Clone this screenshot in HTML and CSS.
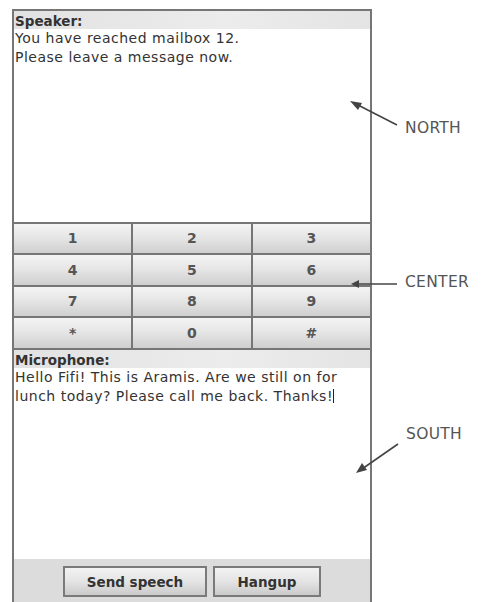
FILE: index.html
```html
<!DOCTYPE html>
<html lang="en">
<head>
    <meta charset="UTF-8">
    <title>BorderLayout phone</title>
    <link rel="stylesheet" href="styles.css">
</head>
<body>
    <div class="figure">
        <div class="phone">
            <!-- NORTH -->
            <div class="area north">
                <div class="area-title">Speaker:</div>
                <div class="area-text">You have reached mailbox 12.<br>Please leave a message now.</div>
            </div>
            <!-- CENTER -->
            <div class="keypad">
                <button class="key">1</button>
                <button class="key">2</button>
                <button class="key">3</button>
                <button class="key">4</button>
                <button class="key">5</button>
                <button class="key">6</button>
                <button class="key">7</button>
                <button class="key">8</button>
                <button class="key">9</button>
                <button class="key">*</button>
                <button class="key">0</button>
                <button class="key">#</button>
            </div>
            <!-- SOUTH -->
            <div class="area south">
                <div class="area-title">Microphone:</div>
                <div class="area-text">Hello Fifi! This is Aramis. Are we still on for lunch today? Please call me back. Thanks!<span class="caret"></span></div>
            </div>
            <div class="actions">
                <button class="action">Send speech</button>
                <button class="action">Hangup</button>
            </div>
        </div>

        <svg class="arrows" width="484" height="602" viewBox="0 0 484 602">
            <line x1="397" y1="125" x2="356" y2="104" />
            <polygon points="350,101 362,103 358,110" />
            <line x1="397" y1="284" x2="358" y2="284" />
            <polygon points="351,284 359,280 359,288" />
            <line x1="398" y1="444" x2="362" y2="469" />
            <polygon points="356,473 362,463 367,470" />
        </svg>
        <span class="label label-north">NORTH</span>
        <span class="label label-center">CENTER</span>
        <span class="label label-south">SOUTH</span>
    </div>
</body>
</html>
```

FILE: styles.css
```css
body {
    margin: 0;
    background-color: #ffffff;
    font-family: "DejaVu Sans", Verdana, sans-serif;
    color: #333;
}
.figure {
    position: relative;
    width: 484px;
    height: 602px;
    overflow: hidden;
    padding: 9px 0 0 12px;
    box-sizing: border-box;
}
.phone {
    width: 360px;
    height: 610px;
    border: 2px solid #767676;
    border-bottom: none;
    box-sizing: border-box;
    display: flex;
    flex-direction: column;
    background-color: #fff;
}
.area {
    display: flex;
    flex-direction: column;
}
.north {
    height: 211px;
}
.south {
    height: 210px;
}
.area-title {
    height: 18px;
    line-height: 20px;
    padding-left: 1px;
    font-size: 13.5px;
    font-weight: bold;
    background: linear-gradient(to right, #e2e2e2, #ececec 60%, #e4e4e4);
}
.area-text {
    font-size: 14px;
    letter-spacing: 0.5px;
    line-height: 19px;
    padding-left: 1px;
    padding-right: 14px;
}
.caret {
    display: inline-block;
    width: 1px;
    height: 14px;
    background-color: #222;
    vertical-align: -2px;
}
.keypad {
    display: grid;
    grid-template-columns: repeat(3, 1fr);
    grid-auto-rows: 29.5px;
    gap: 2px;
    padding: 2px 0;
    background-color: #767676;
}
.key {
    border: none;
    margin: 0;
    padding: 0;
    font-family: "DejaVu Sans", Verdana, sans-serif;
    font-size: 14px;
    font-weight: bold;
    color: #555;
    background: linear-gradient(to bottom, #f4f4f4, #e6e6e6 45%, #cfcfcf);
}
.actions {
    display: flex;
    justify-content: center;
    gap: 6px;
    height: 60px;
    padding-top: 7px;
    box-sizing: border-box;
    background-color: #dcdcdc;
}
.action {
    height: 31px;
    margin: 0;
    padding: 0;
    border: 2px solid #7a7a7a;
    font-family: "DejaVu Sans", Verdana, sans-serif;
    font-size: 13.5px;
    font-weight: bold;
    color: #333;
    background: linear-gradient(to bottom, #f2f2f2, #e4e4e4 50%, #cacaca);
}
.action:first-child {
    width: 144px;
}
.action:last-child {
    width: 108px;
}
.arrows {
    position: absolute;
    left: 0;
    top: 0;
}
.arrows line {
    stroke: #444;
    stroke-width: 1.6;
}
.arrows polygon {
    fill: #444;
}
.label {
    position: absolute;
    font-size: 15.5px;
    color: #555;
    letter-spacing: 0.3px;
}
.label-north {
    left: 405px;
    top: 119px;
}
.label-center {
    left: 405px;
    top: 273px;
}
.label-south {
    left: 406px;
    top: 425px;
}
```
